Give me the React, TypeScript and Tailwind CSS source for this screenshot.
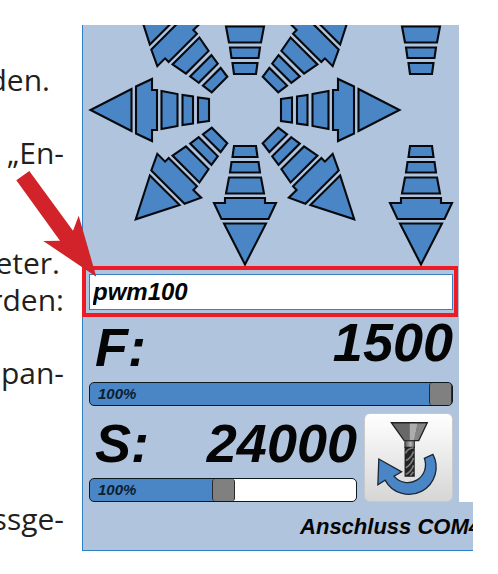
import React, { useState } from 'react';

// Arrow pointing right, its pivot is at 0,0
const JogArrow: React.FC<{ x: number; rotation: number }> = ({ x, rotation }) => (
  <g transform={`translate(${x} 85) rotate(${rotation})`}>
    <path d="M36 -11 L47 -12.5 V12.5 L36 11 Z" />
    <path d="M52 -13.5 L62.5 -15 V15 L52 13.5 Z" />
    <path d="M67.5 -16 L83.5 -19 V19 L67.5 16 Z" />
    <path d="M88 -20 H93 V-31 L109 -23.5 V23.5 L93 31 V20 H88 Z" />
    <path d="M113.5 -21 L154.5 0 L113.5 21 Z" />
  </g>
);

const JogPad = () => (
  <svg viewBox="0 0 376 241" className="block w-full" role="img" aria-label="Achsen verfahren">
    <g fill="#4a86c6" stroke="#05090d" strokeWidth="2.1">
      {[0, 45, 90, 135, 180, 225, 270, 315].map((angle) => (
        <JogArrow key={angle} x={162} rotation={angle} />
      ))}
      <JogArrow x={338} rotation={90} />
      <JogArrow x={338} rotation={270} />
    </g>
  </svg>
);

interface OverrideSliderProps {
  label: string;
  initial: number;
}

const OverrideSlider: React.FC<OverrideSliderProps> = ({ label, initial }) => {
  const [value, setValue] = useState(initial);

  return (
    <div className="relative h-6">
      <input
        type="range"
        aria-label={label}
        value={value}
        onChange={(e) => setValue(Number(e.target.value))}
        style={{ backgroundImage: `linear-gradient(to right, #4a86c6 ${value}%, #ffffff ${value}%)` }}
        className="block h-6 w-full appearance-none overflow-hidden rounded-[5px] border border-[#10181f] [&::-webkit-slider-thumb]:h-[22px] [&::-webkit-slider-thumb]:w-[23px] [&::-webkit-slider-thumb]:appearance-none [&::-webkit-slider-thumb]:rounded-[3px] [&::-webkit-slider-thumb]:border-x [&::-webkit-slider-thumb]:border-[#2a2a2a] [&::-webkit-slider-thumb]:bg-[#808080]"
      />
      <span className="pointer-events-none absolute left-[9px] top-0 text-[15px] leading-6 text-[#0a2033]">100%</span>
    </div>
  );
};

const SpindleIcon = () => (
  <svg viewBox="0 0 264 264" className="h-[88px] w-[88px]" aria-hidden="true">
    <defs>
      <linearGradient id="shank" x1="0" x2="1" y1="0" y2="0">
        <stop offset="0" stopColor="#555" />
        <stop offset="0.6" stopColor="#b5b5b5" />
        <stop offset="1" stopColor="#666" />
      </linearGradient>
    </defs>
    <path d="M206 121 A82 82 0 0 1 61 199 L39 213 L42 135 L111 174 L88 187 A54 54 0 0 0 180 133 Z" fill="#4a86c6" stroke="#1c2733" strokeWidth="4" />
    <path d="M80 25 H189 L163 79 H119 Z" fill="#686868" />
    <path d="M136 25 H160 L149 79 H136 Z" fill="#adadad" />
    <path d="M160 25 H189 L163 79 H149 Z" fill="#858585" />
    <path d="M80 25 H189 L163 79 H119 Z" fill="none" stroke="#222" strokeWidth="4" />
    <rect x="121" y="80" width="29" height="20" fill="url(#shank)" stroke="#333" strokeWidth="3" />
    <rect x="120" y="98" width="31" height="91" fill="#222" />
    <path d="M123 118 Q128 104 147 101 M124 140 Q142 130 147 112 M124 162 Q142 150 147 132 M124 182 Q142 172 147 154 M138 185 L147 174" fill="none" stroke="#808080" strokeWidth="5" />
  </svg>
);

// Manual page column, cut off at the left edge
const ManualText = () => (
  <div className="flex w-[82px] shrink-0 flex-col overflow-hidden whitespace-nowrap pr-[18px] pt-[61px] font-['Open_Sans','Noto_Sans',sans-serif] text-[30px] leading-[37px] text-[#231f20]">
    <p className="flex justify-end pr-[14px]">den.</p>
    <p className="mt-9 flex justify-end">„En-</p>
    <p className="mt-[73px] flex justify-end pr-1">eter.</p>
    <p className="flex justify-end">rden:</p>
    <p className="mt-9 flex justify-end">pan-</p>
    <p className="mt-[109px] flex justify-end">ssge-</p>
  </div>
);

export default function App() {
  const [command, setCommand] = useState('pwm100');

  return (
    <div className="relative flex items-start overflow-hidden bg-white">
      <ManualText />

      <main className="mr-[25px] mt-[25px] min-w-0 flex-1 font-['Liberation_Sans',Arial,sans-serif] font-bold italic text-[#050505]">
        <div className="mr-[14px] bg-[#b0c4de]">
          <div className="border-l border-[#2e80c5]">
            <JogPad />
          </div>

          <div className="mr-px border-4 border-[#ed1c24] pb-[3px] pl-[3px] pr-px pt-1">
            <input
              type="text"
              aria-label="Befehl"
              value={command}
              onChange={(e) => setCommand(e.target.value)}
              className="block h-9 w-full border border-[#3a7fc4] bg-white px-[3px] text-2xl outline-none"
            />
          </div>

          <div className="border-l border-[#2e80c5] pl-[6px] pr-[6px]">
            <div className="flex h-[65px] items-start justify-between text-[54px] leading-[50px]">
              <span className="pl-[6px] pt-[5px]">F:</span>
              <output>1500</output>
            </div>
            <OverrideSlider label="Vorschub" initial={100} />

            <div className="flex gap-[7px] pt-[7px]">
              <div className="min-w-0 flex-1">
                <div className="flex h-[65px] justify-between pt-[5px] text-[54px] leading-[50px]">
                  <span className="pl-[6px]">S:</span>
                  <output>24000</output>
                </div>
                <OverrideSlider label="Spindeldrehzahl" initial={50} />
              </div>
              <button
                type="button"
                aria-label="Spindel starten"
                className="flex h-[89px] w-[89px] items-center justify-center rounded-md border border-[#c9c9cc] bg-linear-to-b from-white to-[#d6d6d6]"
              >
                <SpindleIcon />
              </button>
            </div>
          </div>
        </div>

        <footer className="flex h-[49px] justify-end overflow-hidden whitespace-nowrap border-b border-l border-[#2e80c5] bg-[#b0c4de] text-[22px] leading-[49px]">
          <span className="-mr-2">Anschluss COM4</span>
        </footer>
      </main>

      {/* Pointer to the command line */}
      <svg viewBox="0 0 82 108" className="pointer-events-none absolute left-4 top-[170px] h-[108px] w-[82px]" aria-hidden="true">
        <path d="M13.3 1 L0.3 10.3 L44 70.7 L27.3 71 L80.3 106.7 L62.7 45.7 L57 60.7 Z" fill="#d2232a" />
      </svg>
    </div>
  );
}
